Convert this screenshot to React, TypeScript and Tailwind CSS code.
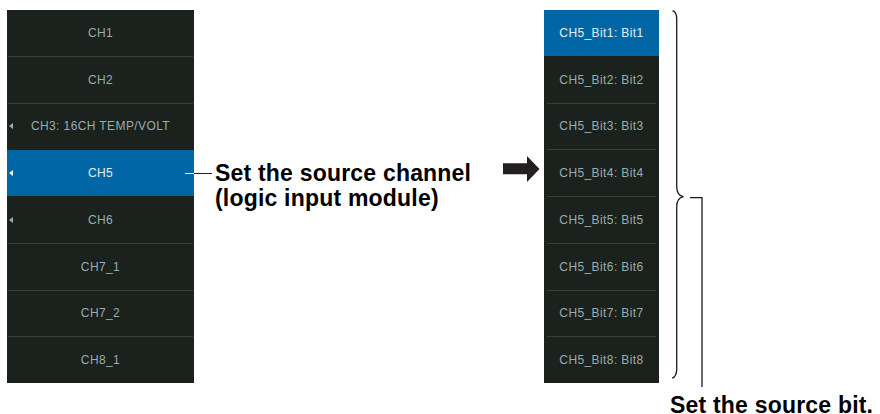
import React from "react";

type Row = { label: string; arrow?: boolean; selected?: boolean };

const leftRows: Row[] = [
  { label: "CH1" },
  { label: "CH2" },
  { label: "CH3: 16CH TEMP/VOLT", arrow: true },
  { label: "CH5", arrow: true, selected: true },
  { label: "CH6", arrow: true },
  { label: "CH7_1" },
  { label: "CH7_2" },
  { label: "CH8_1" },
];

const rightRows: Row[] = [
  { label: "CH5_Bit1: Bit1", selected: true },
  { label: "CH5_Bit2: Bit2" },
  { label: "CH5_Bit3: Bit3" },
  { label: "CH5_Bit4: Bit4" },
  { label: "CH5_Bit5: Bit5" },
  { label: "CH5_Bit6: Bit6" },
  { label: "CH5_Bit7: Bit7" },
  { label: "CH5_Bit8: Bit8" },
];

function Panel({
  rows,
  widthClass,
  sepClass,
  connector,
}: {
  rows: Row[];
  widthClass: string;
  sepClass: string;
  connector?: boolean;
}) {
  return (
    <div
      className={`${widthClass} h-[373px] shrink-0 flex flex-col bg-[#1b211c]`}
      style={{ fontFamily: '"Liberation Sans", Arial, sans-serif' }}
    >
      {rows.map((r, i) => {
        const hideSep = i === 0 || r.selected || rows[i - 1].selected;
        return (
          <React.Fragment key={r.label}>
            {i > 0 && (
              <div
                className={`h-px shrink-0 ${sepClass} ${
                  hideSep ? "bg-transparent" : "bg-[#33413e]"
                }`}
              />
            )}
            <div
              className={`relative flex-1 flex items-center justify-center text-[12px] tracking-[0.4px] ${
                r.selected ? "bg-[#0066a6] text-[#e6eef2]" : "text-[#97adb2]"
              }`}
            >
              {r.arrow && (
                <span
                  className={`absolute left-[2px] top-1/2 -translate-y-1/2 w-0 h-0 border-y-[3.5px] border-y-transparent border-r-[4px] ${
                    r.selected ? "border-r-[#f0f4f6]" : "border-r-[#97adb2]"
                  }`}
                />
              )}
              <span>{r.label}</span>
              {connector && r.selected && (
                <span className="absolute right-0 top-1/2 w-[9px] h-px bg-white" />
              )}
            </div>
          </React.Fragment>
        );
      })}
    </div>
  );
}

export default function App() {
  const bold = { fontFamily: '"Liberation Sans", Arial, sans-serif' };
  return (
    <div className="w-[880px] h-[414px] bg-white flex items-start pt-[10px] pl-[7px] overflow-hidden">
      <Panel rows={leftRows} widthClass="w-[187px]" sepClass="mx-[1px]" connector />

      <div className="w-[309px] shrink-0 mt-[151px] flex items-start">
        <div className="w-[18px] h-px bg-[#231f20] mt-[12px] shrink-0" />
        <div
          className="ml-[3px] text-[23px] leading-[25px] font-bold text-black tracking-[0.2px] whitespace-nowrap"
          style={bold}
        >
          <div>Set the source channel</div>
          <div>(logic input module)</div>
        </div>
      </div>

      <svg
        className="shrink-0 mt-[146px]"
        width="37"
        height="26"
        viewBox="0 0 37 26"
      >
        <path d="M0 7.3 H24 V0 L36.5 13 L24 26 V18.3 H0 Z" fill="#231f20" />
      </svg>

      <div className="ml-[4px] flex flex-col shrink-0">
        <div className="flex items-start">
          <Panel rows={rightRows} widthClass="w-[115px]" sepClass="mx-[3px]" />
          <svg width="46" height="377" viewBox="0 0 46 377" className="shrink-0">
            <path
              d="M13.5 0.6 C16.5 1.5 17.7 4 17.7 9 V176 C17.7 182 19.5 186 24.5 186.7 C19.5 187.5 17.7 191 17.7 197 V359 C17.7 364 16.5 367 13.2 368.2"
              fill="none"
              stroke="#1a1a1a"
              strokeWidth="1.3"
            />
            <path d="M31 187.7 H43 V377" fill="none" stroke="#1a1a1a" strokeWidth="1.3" />
          </svg>
        </div>
        <div
          className="ml-[126px] mt-[9px] text-[23px] leading-[18px] font-bold text-black whitespace-nowrap tracking-[0.2px]"
          style={bold}
        >
          Set the source bit.
        </div>
      </div>
    </div>
  );
}
